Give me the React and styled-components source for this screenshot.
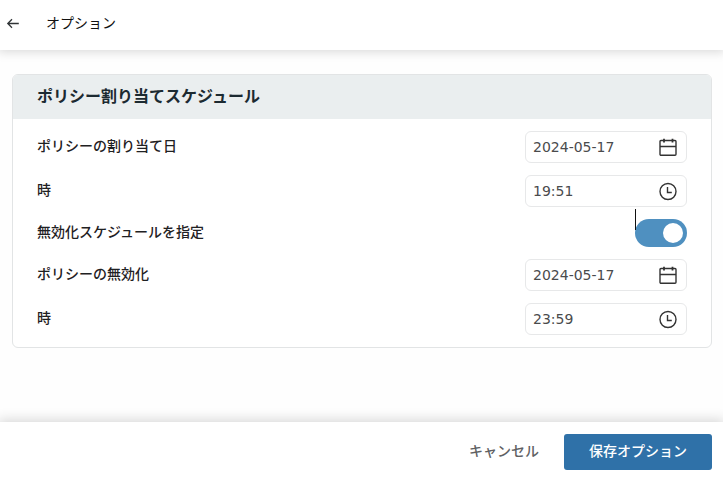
import React, { useState } from "react";
import styled, { createGlobalStyle } from "styled-components";

const GlobalStyle = createGlobalStyle`
  *, *::before, *::after { box-sizing: border-box; }
  body {
    margin: 0;
    background: #fefefe;
    color: #2c2e30;
    font-family: "Noto Sans CJK JP", sans-serif;
    font-size: 14px;
    line-height: 20px;
  }
  button, input { font: inherit; color: inherit; }
`;

const Page = styled.div`
  display: flex;
  flex-direction: column;
  min-height: 100vh;
  overflow-x: clip;
`;

const TopBar = styled.header`
  display: flex;
  align-items: center;
  gap: 24px;
  height: 50px;
  padding: 0 4px 4px;
  background: #fff;
  box-shadow: 0 0 10px 2px rgba(0, 0, 0, 0.15);
`;

const BackButton = styled.button`
  display: flex;
  align-items: center;
  width: 18px;
  height: 18px;
  padding: 0;
  border: 0;
  background: none;
  cursor: pointer;
`;

const PageTitle = styled.h1`
  margin: 0;
  padding-bottom: 2px;
  color: #111;
  font-size: 14px;
  font-weight: 400;
`;

const Main = styled.main`
  flex: 1;
  padding: 24px 11px 24px 12px;
`;

const Card = styled.section`
  overflow: hidden;
  border: 1px solid #e2e4e5;
  border-radius: 6px;
  background: #fff;
`;

const CardTitle = styled.h2`
  margin: 0;
  padding: 8px 24px 12px;
  background: #eaeeef;
  color: #1c2a31;
  font-size: 16px;
  font-weight: 700;
  line-height: 24px;
`;

const Rows = styled.form`
  display: flex;
  flex-direction: column;
  gap: 12px;
  padding: 12px 24px;
`;

const Row = styled.div`
  display: flex;
  align-items: center;
  justify-content: space-between;
`;

const Label = styled.label`
  padding-bottom: 4px;
  color: #1f2123;
  font-weight: 500;
`;

const Field = styled.div`
  display: flex;
  align-items: center;
  width: 162px;
  height: 32px;
  padding: 0 8px 0 7px;
  border: 1px solid #e7e8e9;
  border-radius: 6px;
  background: #fff;
`;

const FieldInput = styled.input`
  flex: 1;
  min-width: 0;
  padding: 0;
  border: 0;
  outline: 0;
  background: none;
  color: #4a4b4d;
  font-family: "DejaVu Sans", sans-serif;
`;

const PickerButton = styled.button`
  display: flex;
  padding: 0;
  border: 0;
  background: none;
  color: #333;
  cursor: pointer;
`;

const SwitchBox = styled.div`
  position: relative;
  display: flex;
`;

const Switch = styled.input`
  appearance: none;
  display: flex;
  align-items: center;
  justify-content: ${(p) => (p.checked ? "flex-end" : "flex-start")};
  width: 52px;
  height: 28px;
  margin: 0;
  padding: 0 4px;
  border-radius: 14px;
  background: ${(p) => (p.checked ? "#4f90c0" : "#b8bec2")};
  cursor: pointer;

  &::before {
    content: "";
    width: 20px;
    height: 20px;
    border-radius: 50%;
    background: #fff;
  }
`;

const Caret = styled.span`
  position: absolute;
  top: -10px;
  left: 0;
  width: 1px;
  height: 21px;
  background: #111;
`;

const Footer = styled.footer`
  display: flex;
  align-items: center;
  justify-content: flex-end;
  height: 56px;
  padding: 4px 11px 0;
  background: #fff;
  box-shadow: 0 0 12px 2px rgba(0, 0, 0, 0.16);
`;

const ActionButton = styled.button`
  height: 36px;
  padding: 0 25px 4px;
  border: 0;
  border-radius: 3px;
  background: ${(p) => (p.$primary ? "#2f71a8" : "transparent")};
  color: ${(p) => (p.$primary ? "#fff" : "#606163")};
  font-weight: 500;
  cursor: pointer;
`;

const ArrowIcon = () => (
  <svg width="18" height="18" viewBox="0 0 18 18" fill="none" stroke="#303436" strokeWidth="1.3" aria-hidden="true">
    <path d="M4 9.5H14.8M8 5.3L3.8 9.5L8 13.7" />
  </svg>
);

const CalendarIcon = () => (
  <svg width="20" height="20" viewBox="0 0 20 20" fill="none" stroke="currentColor" strokeWidth="1.4" aria-hidden="true">
    <rect x="2" y="3.5" width="16" height="14.7" rx="1" />
    <path d="M2 9.5H18" />
    <path d="M6 1.8V5.4M14.5 1.8V5.4" strokeWidth="1.8" />
  </svg>
);

const ClockIcon = () => (
  <svg width="20" height="20" viewBox="0 0 20 20" fill="none" stroke="currentColor" strokeWidth="1.4" aria-hidden="true">
    <circle cx="10" cy="10.5" r="8" />
    <path d="M9.5 6V11.5H13.8" />
  </svg>
);

function PickerRow({ id, label, kind, initial }) {
  const [value, setValue] = useState(initial);
  return (
    <Row>
      <Label htmlFor={id}>{label}</Label>
      <Field>
        <FieldInput id={id} type="text" value={value} onChange={(e) => setValue(e.target.value)} />
        <PickerButton type="button" aria-label={label}>
          {kind === "date" ? <CalendarIcon /> : <ClockIcon />}
        </PickerButton>
      </Field>
    </Row>
  );
}

export default function App() {
  const [enabled, setEnabled] = useState(true);
  return (
    <>
      <GlobalStyle />
      <Page>
        <TopBar>
          <BackButton type="button" aria-label="戻る">
            <ArrowIcon />
          </BackButton>
          <PageTitle>オプション</PageTitle>
        </TopBar>
        <Main>
          <Card>
            <CardTitle>ポリシー割り当てスケジュール</CardTitle>
            <Rows id="schedule" onSubmit={(e) => e.preventDefault()}>
              <PickerRow id="start-date" label="ポリシーの割り当て日" kind="date" initial="2024-05-17" />
              <PickerRow id="start-time" label="時" kind="time" initial="19:51" />
              <Row>
                <Label htmlFor="use-end">無効化スケジュールを指定</Label>
                <SwitchBox>
                  <Switch
                    id="use-end"
                    type="checkbox"
                    role="switch"
                    checked={enabled}
                    onChange={(e) => setEnabled(e.target.checked)}
                  />
                  <Caret />
                </SwitchBox>
              </Row>
              <PickerRow id="end-date" label="ポリシーの無効化" kind="date" initial="2024-05-17" />
              <PickerRow id="end-time" label="時" kind="time" initial="23:59" />
            </Rows>
          </Card>
        </Main>
        <Footer>
          <ActionButton type="button">キャンセル</ActionButton>
          <ActionButton type="submit" form="schedule" $primary>保存オプション</ActionButton>
        </Footer>
      </Page>
    </>
  );
}
